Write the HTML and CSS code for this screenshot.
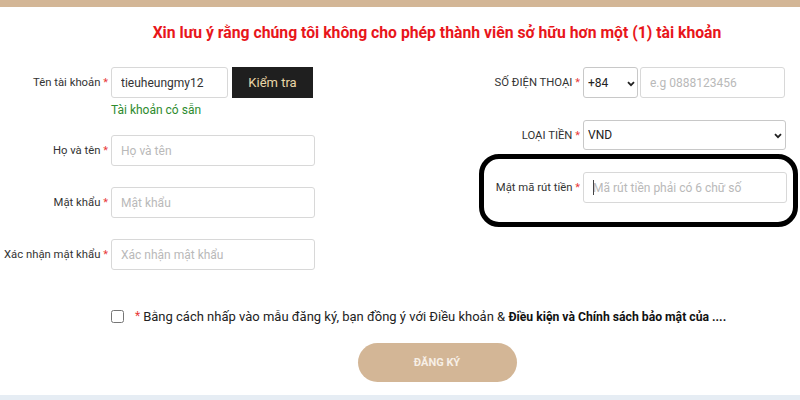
FILE: index.html
```html
<!DOCTYPE html>
<html lang="vi">
<head>
<meta charset="utf-8">
<link rel="stylesheet" href="styles.css">
</head>
<body>
<div class="topbar"></div>
<h1 class="title">Xin lưu ý rằng chúng tôi không cho phép thành viên sở hữu hơn một (1) tài khoản</h1>
<div class="form">
  <div class="col col-left">
    <div class="row">
      <label class="lbl">Tên tài khoản <span class="req">*</span></label>
      <input class="inp inp-user" type="text" value="tieuheungmy12">
      <button class="check-btn" type="button">Kiểm tra</button>
    </div>
    <div class="ok">Tài khoản có sẵn</div>
    <div class="row row-gap1">
      <label class="lbl">Họ và tên <span class="req">*</span></label>
      <input class="inp inp-wide" type="text" placeholder="Họ và tên">
    </div>
    <div class="row row-gap">
      <label class="lbl">Mật khẩu <span class="req">*</span></label>
      <input class="inp inp-wide" type="password" placeholder="Mật khẩu">
    </div>
    <div class="row row-gap">
      <label class="lbl">Xác nhận mật khẩu <span class="req">*</span></label>
      <input class="inp inp-wide" type="password" placeholder="Xác nhận mật khẩu">
    </div>
  </div>
  <div class="col col-right">
    <div class="row">
      <label class="lbl lbl-r">SỐ ĐIỆN THOẠI <span class="req">*</span></label>
      <select class="sel sel-code"><option>+84</option></select>
      <input class="inp inp-phone" type="text" placeholder="e.g 0888123456">
    </div>
    <div class="row row-gap2">
      <label class="lbl lbl-r">LOẠI TIỀN <span class="req">*</span></label>
      <select class="sel sel-cur"><option>VND</option></select>
    </div>
    <div class="row row-gap2 row-pin">
      <label class="lbl lbl-r">Mật mã rút tiền <span class="req">*</span></label>
      <input class="inp inp-pin" type="text" placeholder="Mã rút tiền phải có 6 chữ số">
      <span class="caret"></span>
      <div class="highlight"></div>
    </div>
  </div>
</div>
<div class="agree">
  <input class="cb" type="checkbox">
  <span class="req">*</span>
  <span class="agree-text">Bằng cách nhấp vào mẫu đăng ký, bạn đồng ý với Điều khoản &amp; <b>Điều kiện và Chính sách bảo mật của ....</b></span>
</div>
<div class="submit-wrap">
  <button class="submit" type="button">ĐĂNG KÝ</button>
</div>
<div class="bottombar"></div>
</body>
</html>
```
FILE: styles.css
```css
html, body {
  margin: 0;
  padding: 0;
  background: #fff;
  width: 800px;
  height: 400px;
  overflow: hidden;
  font-family: Roboto, "Noto Sans", Arial, sans-serif;
  color: #333;
}
.topbar {
  height: 7px;
  background: #d3b696;
}
.title {
  margin: 16px 0 0;
  padding-left: 74px;
  height: 20px;
  line-height: 20px;
  font-size: 15.75px;
  font-weight: 700;
  color: #e8161b;
  text-align: center;
}
.form {
  display: flex;
  margin-top: 24px;
  height: 203px;
}
.col {
  width: 400px;
  display: flex;
  flex-direction: column;
}
.row {
  display: flex;
  align-items: center;
  height: 31px;
  position: relative;
}
.row-gap1 { margin-top: 18px; }
.row-gap { margin-top: 21px; }
.row-gap2 { margin-top: 22px; height: 30px; }
.row-pin { height: 31px; }
.lbl {
  width: 108px;
  padding-right: 3px;
  text-align: right;
  font-size: 11.3px;
  color: #333;
  white-space: nowrap;
}
.lbl-r {
  width: 180px;
}
.req {
  color: #e83a3a;
  font-size: 11px;
}
.inp {
  box-sizing: border-box;
  height: 31px;
  border: 1px solid #d8d8d8;
  border-radius: 3px;
  padding: 0 9px;
  font-family: inherit;
  font-size: 12px;
  color: #333;
  outline: none;
  background: #fff;
}
.inp::placeholder { color: #b9b9b9; }
.inp-user { width: 117px; }
.inp-wide { width: 204px; }
.check-btn {
  margin-left: 4px;
  width: 81px;
  height: 31px;
  border: none;
  background: #1f1f1f;
  color: #ead7a8;
  font-family: inherit;
  font-size: 13px;
  padding: 0;
}
.ok {
  margin-top: 5px;
  margin-left: 111px;
  height: 14px;
  line-height: 14px;
  font-size: 12px;
  color: #2e8b2e;
}
.sel {
  box-sizing: border-box;
  appearance: none;
  -webkit-appearance: none;
  height: 31px;
  border: 1px solid #c8c8c8;
  border-radius: 3px;
  padding: 0 4px;
  font-family: inherit;
  font-size: 12px;
  color: #222;
  background: #fff url("data:image/svg+xml;utf8,<svg xmlns='http://www.w3.org/2000/svg' width='8' height='6' viewBox='0 0 8 6'><path d='M1 1.2 L4 4.2 L7 1.2' fill='none' stroke='%23222' stroke-width='1.8'/></svg>") no-repeat;
}
.sel-code {
  width: 55px;
  background-position: 43px 13px;
}
.inp-phone {
  width: 145px;
  margin-left: 2px;
}
.sel-cur {
  width: 203px;
  height: 30px;
  background-position: 190px 12px;
}
.inp-pin { width: 204px; }
.caret {
  position: absolute;
  left: 193px;
  top: 8px;
  width: 1px;
  height: 15px;
  background: #444;
}
.highlight {
  position: absolute;
  left: 79px;
  top: -18px;
  width: 319px;
  height: 73px;
  box-sizing: border-box;
  border: 5px solid #000;
  border-radius: 20px;
  pointer-events: none;
}
.agree {
  display: flex;
  align-items: center;
  margin-top: 36px;
  height: 20px;
  padding-left: 111px;
  font-size: 13px;
  color: #222;
}
.cb {
  margin: 0;
  width: 13px;
  height: 13px;
}
.agree .req {
  margin-left: 11px;
  margin-right: 3px;
  font-size: 12px;
}
.agree-text b {
  color: #111;
  font-weight: 700;
  font-size: 12.2px;
}
.submit-wrap {
  display: flex;
  justify-content: center;
  padding-left: 74px;
  margin-top: 17px;
}
.submit {
  width: 159px;
  height: 39px;
  border: none;
  border-radius: 20px;
  background: #d3b696;
  color: #f7efe6;
  font-family: inherit;
  font-weight: 700;
  font-size: 11px;
  padding: 0;
}
.bottombar {
  margin-top: 13px;
  height: 6px;
  background: #e6edf4;
}
```
